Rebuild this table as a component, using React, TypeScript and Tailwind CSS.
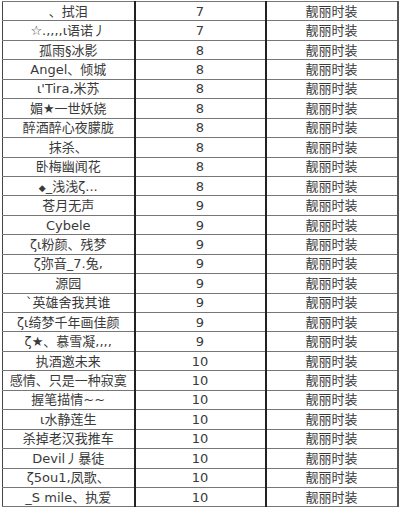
import React from "react";

const ROWS: [React.ReactNode, number][] = [
  ["、拭泪", 7],
  ["☆.,,,,ι语诺丿", 7],
  ["孤雨§冰影", 8],
  ["Angel、倾城", 8],
  ["ι'Tira,米苏", 8],
  ["媚★一世妖娆", 8],
  ["醉酒醉心夜朦胧", 8],
  ["抹杀、", 8],
  ["卧梅幽闻花", 8],
  [
    <>
      <span className="text-[9px]">◆</span>_浅浅ζ...
    </>,
    8,
  ],
  ["苍月无声", 9],
  ["Cybele", 9],
  ["ζι粉颜、残梦", 9],
  ["ζ弥音_7.兔,", 9],
  ["源园", 9],
  ["`英雄舍我其谁", 9],
  ["ζι绮梦千年画佳颜", 9],
  ["ζ★、慕雪凝,,,,", 9],
  ["执酒邀未来", 10],
  ["感情、只是一种寂寞", 10],
  ["握笔描情~~", 10],
  ["ι水静莲生", 10],
  ["杀掉老汉我推车", 10],
  ["Devil丿暴徒", 10],
  ["ζ5ou1,凤歌、", 10],
  ["_S mile、执爱", 10],
];

export default function App() {
  return (
    <div
      className="w-[400px] h-[512px] bg-white overflow-hidden pl-[2px] pt-[1px]"
      style={{ fontFamily: '"DejaVu Sans", "Noto Sans CJK SC", sans-serif' }}
    >
      <table className="border-collapse w-[395px] table-fixed text-[13px] text-[#3a3a3a]">
        <colgroup>
          <col className="w-[132px]" />
          <col className="w-[131px]" />
          <col className="w-[132px]" />
        </colgroup>
        <tbody>
          {ROWS.map(([name, lvl], i) => (
            <tr key={i} className="h-[19.45px]">
              <td className="border-y border-y-[#777] border-l border-l-[#444] border-r-2 border-r-[#222] text-center leading-none p-0 whitespace-nowrap">
                {name}
              </td>
              <td className="border-y border-y-[#777] border-r-2 border-r-[#222] text-center leading-none p-0">
                {lvl}
              </td>
              <td className="border-y border-y-[#777] border-r-2 border-r-[#555] text-center leading-none p-0">
                靓丽时装
              </td>
            </tr>
          ))}
        </tbody>
      </table>
    </div>
  );
}
